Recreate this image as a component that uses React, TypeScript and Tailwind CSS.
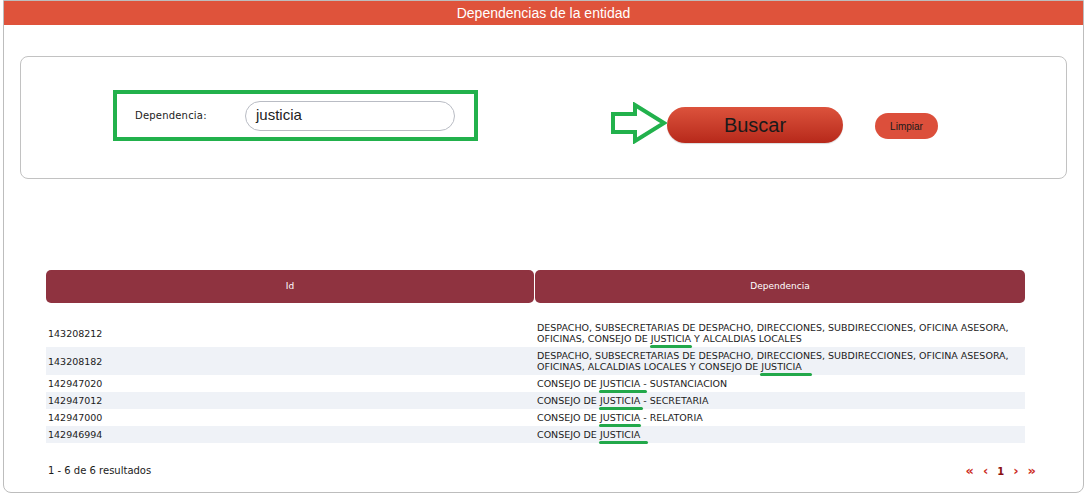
import React from "react";

type Row = {
  id: string;
  before: string;
  after: string;
  mark: string;
};

// right overhang of the green mark, per row
const rows: Row[] = [
  {
    id: "143208212",
    before:
      "DESPACHO, SUBSECRETARIAS DE DESPACHO, DIRECCIONES, SUBDIRECCIONES, OFICINA ASESORA, OFICINAS, CONSEJO DE ",
    after: " Y ALCALDIAS LOCALES",
    mark: "-right-[1px]",
  },
  {
    id: "143208182",
    before:
      "DESPACHO, SUBSECRETARIAS DE DESPACHO, DIRECCIONES, SUBDIRECCIONES, OFICINA ASESORA, OFICINAS, ALCALDIAS LOCALES Y CONSEJO DE ",
    after: "",
    mark: "-right-[10px]",
  },
  {
    id: "142947020",
    before: "CONSEJO DE ",
    after: " - SUSTANCIACION",
    mark: "-right-[7px]",
  },
  {
    id: "142947012",
    before: "CONSEJO DE ",
    after: " - SECRETARIA",
    mark: "-right-[3px]",
  },
  {
    id: "142947000",
    before: "CONSEJO DE ",
    after: " - RELATORIA",
    mark: "-right-[1px]",
  },
  {
    id: "142946994",
    before: "CONSEJO DE ",
    after: "",
    mark: "-right-[8px]",
  },
];

function Arrow() {
  return (
    <svg className="mt-[45px] ml-[133px] h-[42px] w-[56px] shrink-0" viewBox="0 0 56 42">
      <polygon
        fill="none"
        points="2,12 24,12 24,3 53,21 24,39 24,30 2,30"
        stroke="#22b14c"
        strokeWidth="4"
      />
    </svg>
  );
}

export default function App() {
  return (
    <div className="min-h-screen bg-white pl-[3px] font-['DejaVu_Sans',sans-serif] text-[#1b1b1b]">
      <div className="flex h-[493px] w-[1081px] flex-col rounded-b-[8px] border border-[#bdbdbd]">
        <div className="flex h-[24px] items-center justify-center bg-[#df533b] font-['Liberation_Sans',sans-serif] text-[14px] text-white">
          Dependencias de la entidad
        </div>

        <div className="mx-[16px] mt-[31px] flex h-[123px] items-start rounded-[8px] border border-[#c2c2c2]">
          <div className="mt-[33px] ml-[92px] flex h-[51px] w-[365px] items-center border-4 border-[#22b14c] pl-[18px]">
            <span className="w-[110px] text-[10px] tracking-[0.2px]">Dependencia:</span>
            <div className="flex h-[30px] w-[210px] items-center rounded-full border border-[#b9bcc4] pl-[10px] font-['Liberation_Sans',sans-serif] text-[15px] text-[#222]">
              justicia
            </div>
          </div>

          <Arrow />

          <button
            className="mt-[50px] h-[36px] w-[176px] rounded-full bg-gradient-to-b from-[#dc523c] to-[#b7281a] font-['Liberation_Sans',sans-serif] text-[20px] text-[#1a1a1a] shadow-[0_1px_1px_rgba(0,0,0,0.15)]"
            type="button"
          >
            Buscar
          </button>

          <button
            className="mt-[56px] ml-[32px] h-[26px] w-[63px] rounded-full bg-[#dc4f3b] font-['Liberation_Sans',sans-serif] text-[10px] text-[#1a1a1a]"
            type="button"
          >
            Limpiar
          </button>
        </div>

        <div className="mt-[91px] ml-[42px] w-[979px]">
          <div className="grid h-[33px] grid-cols-[488px_490px] gap-x-px text-[9px] text-white">
            <div className="flex items-center justify-center rounded-[5px] bg-[#8f3340]">Id</div>
            <div className="flex items-center justify-center rounded-[5px] bg-[#8f3340]">Dependencia</div>
          </div>

          <div className="mt-[16px] text-[9.5px] leading-[11px]">
            {rows.map((row, index) => (
              <div
                className={`grid grid-cols-[489px_490px] py-[3px] ${
                  index % 2 === 1 ? "bg-[#eff2f7]" : "bg-white"
                }`}
                key={row.id}
              >
                <span className="flex items-center px-[2px]">{row.id}</span>
                <span className="pr-[8px] pl-[2px]">
                  {row.before}
                  <span className="relative">
                    JUSTICIA
                    <span
                      className={`absolute -bottom-[4px] -left-[1px] h-[3px] rounded-full bg-[#22a84a] ${row.mark}`}
                    />
                  </span>
                  {row.after}
                </span>
              </div>
            ))}
          </div>
        </div>

        <div className="mt-[18px] flex items-center justify-between pr-[47px] pl-[44px]">
          <span className="text-[10px]">1 - 6 de 6 resultados</span>
          <div className="flex items-center gap-[9px] text-[13px] font-bold text-[#cc2b22]">
            <span>«</span>
            <span>‹</span>
            <span className="mt-[2px] text-[10px] text-[#8b1010]">1</span>
            <span>›</span>
            <span>»</span>
          </div>
        </div>
      </div>
    </div>
  );
}
